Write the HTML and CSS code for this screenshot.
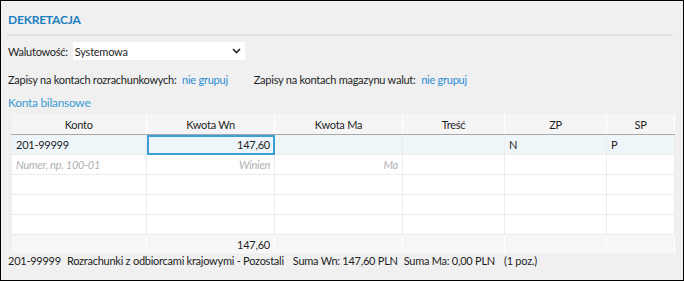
FILE: index.html
```html
<!DOCTYPE html>
<html lang="pl">
<head>
    <meta charset="UTF-8">
    <title>Dekretacja</title>
    <link rel="stylesheet" href="styles.css">
</head>
<body>
    <div class="panel">
        <h2 class="title">DEKRETACJA</h2>

        <div class="field-row">
            <span class="label">Walutowość:</span>
            <div class="dropdown">
                <span>Systemowa</span>
                <svg width="9" height="6" viewBox="0 0 9 6"><path d="M1 1 L4.5 4.5 L8 1" fill="none" stroke="#222" stroke-width="1.6"/></svg>
            </div>
        </div>

        <div class="options-row">
            <span>Zapisy na kontach rozrachunkowych: <a class="link">nie grupuj</a></span>
            <span>Zapisy na kontach magazynu walut: <a class="link">nie grupuj</a></span>
        </div>

        <div class="section">Konta bilansowe</div>

        <table class="grid">
            <colgroup>
                <col style="width:135px">
                <col style="width:128px">
                <col style="width:128px">
                <col style="width:102px">
                <col style="width:102px">
                <col style="width:68px">
            </colgroup>
            <thead>
                <tr>
                    <th>Konto</th>
                    <th>Kwota Wn</th>
                    <th>Kwota Ma</th>
                    <th>Treść</th>
                    <th>ZP</th>
                    <th>SP</th>
                </tr>
            </thead>
            <tbody>
                <tr class="selected">
                    <td>201-99999</td>
                    <td class="num active">147,60</td>
                    <td class="num"></td>
                    <td></td>
                    <td>N</td>
                    <td>P</td>
                </tr>
                <tr class="new-row">
                    <td>Numer, np. 100-01</td>
                    <td class="num">Winien</td>
                    <td class="num">Ma</td>
                    <td></td>
                    <td></td>
                    <td></td>
                </tr>
                <tr><td></td><td></td><td></td><td></td><td></td><td></td></tr>
                <tr><td></td><td></td><td></td><td></td><td></td><td></td></tr>
                <tr><td></td><td></td><td></td><td></td><td></td><td></td></tr>
            </tbody>
            <tfoot>
                <tr>
                    <td></td>
                    <td class="num">147,60</td>
                    <td></td>
                    <td></td>
                    <td></td>
                    <td></td>
                </tr>
            </tfoot>
        </table>

        <div class="status">
            <span>201-99999</span>
            <span>Rozrachunki z odbiorcami krajowymi - Pozostali</span>
            <span class="gap">Suma Wn: 147,60 PLN</span>
            <span>Suma Ma: 0,00 PLN</span>
            <span class="gap">(1 poz.)</span>
        </div>
    </div>
</body>
</html>
```

FILE: styles.css
```css
html, body {
    margin: 0;
    padding: 0;
}
body {
    font-family: "Segoe UI", Lato, sans-serif;
    font-size: 11px;
    letter-spacing: -0.25px;
    color: #1e1e1e;
}
.panel {
    box-sizing: border-box;
    width: 684px;
    height: 281px;
    border: 1px solid #000;
    background: #f0f0f0;
    padding: 0 10px 0 6px;
}
.title {
    margin: 0;
    padding: 10px 0 6px 1px;
    font-size: 12px;
    font-weight: bold;
    letter-spacing: -0.2px;
    color: #1b80bf;
    line-height: 17px;
    border-bottom: 2px solid #e0e0e0;
}
.field-row {
    display: flex;
    align-items: center;
    gap: 5px;
    margin-top: 6px;
    padding-left: 1px;
}
.dropdown {
    box-sizing: border-box;
    width: 172px;
    height: 18px;
    background: #fff;
    display: flex;
    align-items: center;
    justify-content: space-between;
    padding: 0 4px 0 2px;
}
.options-row {
    display: flex;
    gap: 26px;
    margin-top: 12px;
    padding-left: 1px;
    line-height: 16px;
}
.link {
    color: #2a8bd4;
    margin-left: 3px;
}
.section {
    margin-top: 7px;
    padding-left: 1px;
    font-size: 12px;
    letter-spacing: -0.3px;
    color: #3a9cd0;
    line-height: 16px;
}
.grid {
    margin: 3px 0 0 4px;
    table-layout: fixed;
    width: 663px;
    border-collapse: collapse;
}
.grid th {
    height: 20px;
    padding: 0;
    background: #f5f5f5;
    font-weight: normal;
    border-right: 1px solid #fff;
    border-bottom: 1px solid #a8a8a8;
}
.grid td {
    height: 19px;
    padding: 0 4px;
    background: #fff;
    border: 1px solid #ececec;
    white-space: nowrap;
    overflow: hidden;
}
.grid td.num {
    text-align: right;
}
.grid tr.selected td {
    background: #eef6fa;
}
.grid tr.selected td.active {
    outline: 2px solid #3b9fd9;
    outline-offset: -2px;
}
.grid tr.new-row td {
    font-style: italic;
    color: #b0b0b0;
}
.grid tfoot td {
    background: #f7f7f7;
    border: none;
    border-top: 1px solid #a8a8a8;
    border-right: 1px solid #fff;
    height: 18px;
}
.status {
    display: flex;
    gap: 6px;
    margin-top: 1px;
    padding-left: 1px;
    line-height: 14px;
}
.status .gap {
    margin-left: 3px;
}
```
